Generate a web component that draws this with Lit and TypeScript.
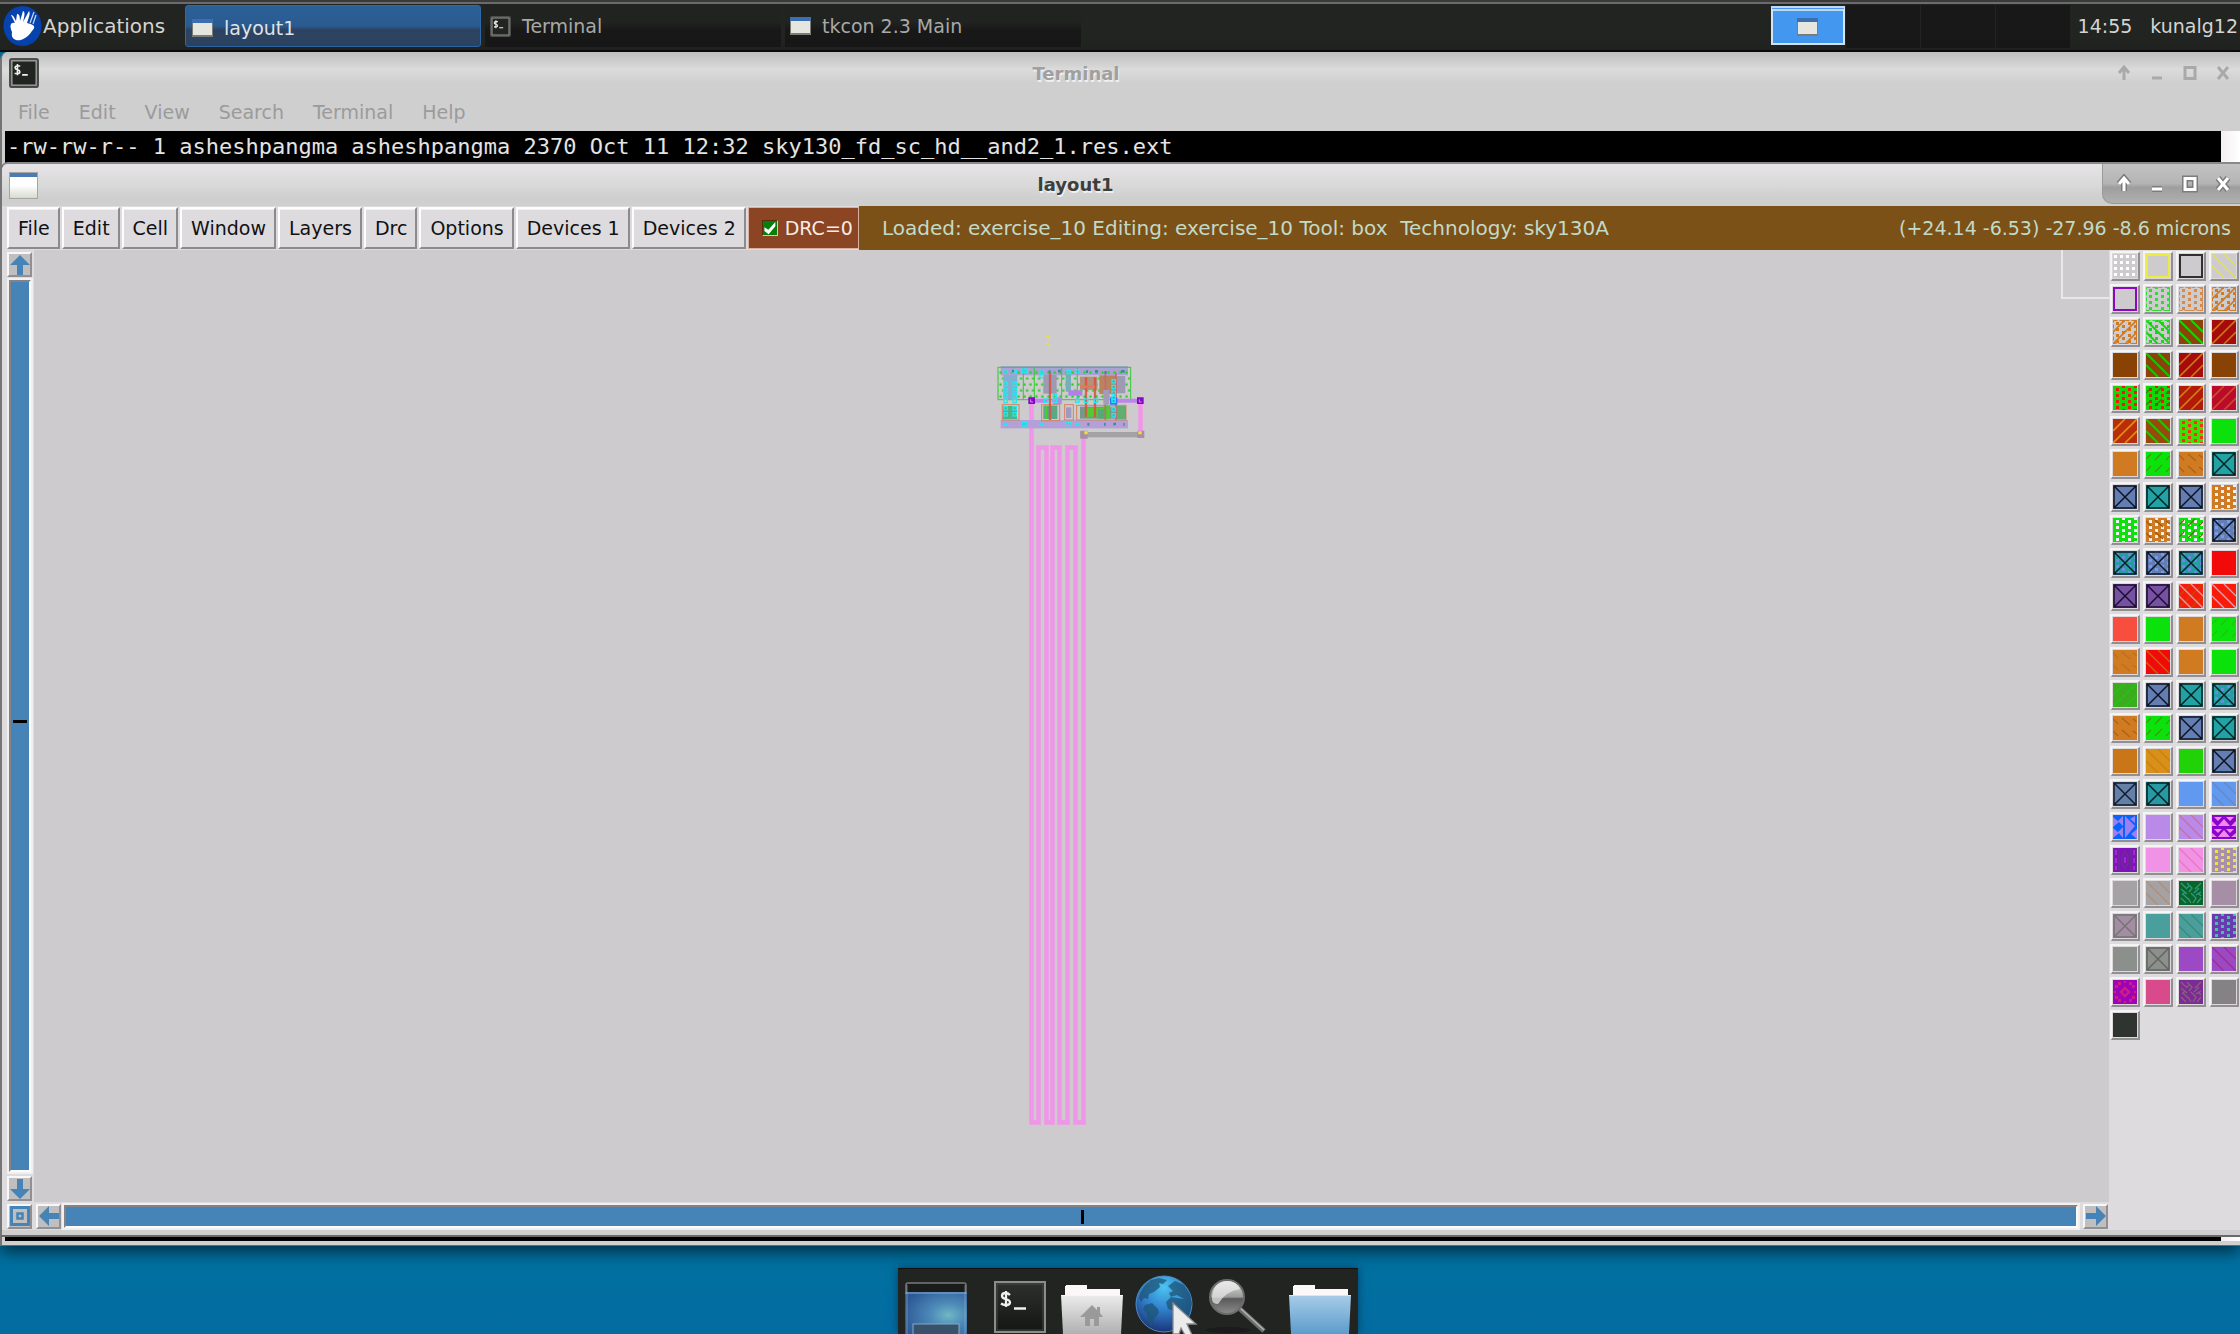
import { LitElement, html, svg, css } from "lit";
import { customElement, property } from "lit/decorators.js";

type Mark = { kind: string; color?: string };
type Swatch = { fill: string; marks?: Mark[] };

const BG = "#cdcbce";
const GREEN = "#0be20b";
const ORANGE = "#d07a22";
const m = (kind: string, color = "#000"): Mark => ({ kind, color });
const s = (fill: string, ...marks: Mark[]): Swatch => ({ fill, marks });
const blueX = s("#647db2", m("cross", "#0c1420"));
const tealX = s("#22a2a4", m("cross", "#04201f"));
const blueDotX = s("#647db2", m("dots", "#6c9cf8"), m("cross", "#0c1420"));
const tealDotX = s("#229ea4", m("dots", "#6a8ce0"), m("cross", "#04201f"));
const brown = s("#884204");
const redSlash = s("#a60a0a", m("slash", "#cc7418"));

const SWATCHES: Swatch[] = [
  s(BG, m("grid", "#fff")), s(BG, m("box", "#ecec3e")), s(BG, m("box", "#2e322e")), s(BG, m("thinback", "#e2e058")),
  s(BG, m("box", "#8a08c4")), s(BG, m("dots", "#2fdc2f"), m("rim", "#2fdc2f")), s(BG, m("dots", "#d88a48"), m("rim", "#d88a48")), s(BG, m("dots", ORANGE), m("slash", ORANGE), m("rim", ORANGE)),
  s(BG, m("dots", ORANGE), m("slash", ORANGE), m("rim", ORANGE)), s(BG, m("dots", "#18d818"), m("back", "#10d810"), m("rim", "#2fdc2f")), s("#8c4208", m("back", "#12d800")), redSlash,
  brown, s("#8c4208", m("back", "#12c800")), redSlash, brown,
  s("#10d808", m("bigdots", "#f01808")), s("#10d808", m("bigdots", "#f01808"), m("dashup", "#4c7000")), s("#b01c08", m("slash", "#d47a14")), s("#ba0c2a", m("slash", "#d2482c")),
  s("#b82e0a", m("slash", "#e88c14")), s("#984a0c", m("back", "#24c400")), s("#3cde04", m("bigdots", "#f43410")), s(GREEN),
  s(ORANGE), s(GREEN, m("dashup", "#3c9a10")), s(ORANGE, m("dashdown", "#a86414")), tealX,
  blueX, tealX, blueX, s(ORANGE, m("holes", "#f2eef2")),
  s(GREEN, m("holes", "#f2eef2")), s(ORANGE, m("holes", "#f2eef2"), m("dashdown", "#9c5a10")), s(GREEN, m("holes", "#f2eef2"), m("dashup", "#7c5a18")), blueDotX,
  tealDotX, blueDotX, tealDotX, s("#f20a0a"),
  s("#7852a2", m("cross", "#1c0c30")), s("#7852a2", m("cross", "#1c0c30")), s("#fa1a08", m("thinslash", "#c84408"), m("thinback", "#d0a0a8")), s("#fa1a08", m("thinback", "#d8a0b0")),
  s("#f84e40"), s(GREEN), s(ORANGE), s(GREEN, m("dashup", "#28c010")),
  s(ORANGE, m("dashdown", "#b87020")), s("#f00a0a", m("thinback", "#d06010")), s(ORANGE), s(GREEN),
  s("#3eaa20", m("thinslash", "#18cc10")), blueX, tealX, tealDotX,
  s(ORANGE, m("dashdown", "#a86414")), s(GREEN, m("dashup", "#3c9a10")), blueX, tealX,
  s("#c87618"), s("#d89018", m("thinback", "#c88018")), s("#22d208"), blueX,
  s("#6480a8", m("cross", "#101c2c")), s("#2898a4", m("cross", "#04201f")), s("#6299f0"), s("#6299f0", m("thinback", "#6688c0")),
  s("#0a62fe", m("bows", "#9a80f0")), s("#ba8ae8"), s("#ba8ae8", m("thinback", "#c470a8")), s("#8a04ca", m("triangles", "#ee8aee")),
  s("#8210bc", m("lattice", "#5e3c80")), s("#f092e6"), s("#f092e6", m("thinback", "#f474bc")), s("#a890ac", m("bigdots", "#f0e23c")),
  s("#a4a2a4"), s("#a4a2a4", m("thinback", "#b48e70")), s("#0a6628", m("weave", "#2e9884")), s("#a68ea6"),
  s("#a28ea2", m("cross", "#767476")), s("#4a9e9c"), s("#4a9e9c", m("thinback", "#3c8c78")), s("#6a3ab0", m("bigdots", "#44c0a4")),
  s("#8c908c"), s("#8c908c", m("cross", "#626662")), s("#9c4ac4"), s("#9c4ac4", m("thinback", "#a02c94")),
  s("#9c04b4", m("diamonds", "#d01c8a")), s("#d84a8c"), s("#7c2a96", m("weave", "#88607a")), s("#848284"),
  s("#303430"),
];

const range = (n: number) => Array.from({ length: n }, (_, i) => i);

function dots(color: string, size: number) {
  return range(4).map((i) =>
    range(5).map((j) => {
      const y = j * 6 + (i % 2 ? -1 : 2);
      return svg`<rect x=${3 + i * 6} y=${y} width=${size} height=${size} fill=${color} />`;
    })
  );
}

function drawMark(k: Mark) {
  const c = k.color!;
  switch (k.kind) {
    case "grid":
      return range(4).map((i) => range(4).map((j) => svg`<rect x=${1 + i * 6} y=${1 + j * 6} width="3" height="3" fill=${c} />`));
    case "box":
      return svg`<rect x="1" y="1" width="22" height="22" fill="none" stroke=${c} stroke-width="2" />`;
    case "rim":
      return svg`<rect x=".5" y=".5" width="23" height="23" fill="none" stroke=${c} stroke-dasharray="4 2" />`;
    case "dots":
      return dots(c, 3);
    case "bigdots":
      return dots(c, 3);
    case "back":
      return svg`<path d="M0 0L24 24M0 12L12 24M12 0L24 12" stroke=${c} stroke-width="2" />`;
    case "slash":
      return svg`<path d="M0 24L24 0M0 12L12 0M12 24L24 12" stroke=${c} stroke-width="1.6" />`;
    case "thinback":
      return svg`<path d="M0 0L24 24M0 12L12 24M12 0L24 12" stroke=${c} stroke-width="1.4" />`;
    case "thinslash":
      return svg`<path d="M0 24L24 0M0 12L12 0M12 24L24 12" stroke=${c} stroke-width="1.4" />`;
    case "dashup":
      return svg`<path d="M0 7L5 2M9 8L16 1M20 8L24 4M0 19L5 14M9 20L16 13M20 20L24 16" stroke=${c} stroke-width="1.2" />`;
    case "dashdown":
      return svg`<path d="M0 3L5 8M9 2L17 9M20 3L24 6M0 15L5 20M9 14L17 21M20 15L24 18" stroke=${c} stroke-width="1.2" />`;
    case "cross":
      return svg`<path d="M1 1H23V23H1ZM1 1L23 23M23 1L1 23" fill="none" stroke=${c} stroke-width="1.5" />`;
    case "holes":
      return dots(c, 3);
    case "bows":
      return svg`<path d="M0 2L6 7L0 12ZM0 13L6 18L0 23ZM10 1V11L5 6ZM10 12V23L5 17ZM12 1L22 11L12 23ZM22 1L17 4L22 8ZM24 14L18 19L24 24Z" fill=${c} />`;
    case "triangles":
      return svg`<path d="M2 2H10L6 6ZM14 2H22L18 6ZM6 11L12 4L18 11ZM0 6L5 11H0ZM24 6L19 11H24ZM2 14H10L6 18ZM14 14H22L18 18ZM6 22L12 15L18 22ZM0 18L5 22H0ZM24 18L19 22H24Z" fill=${c} />`;
    case "lattice":
      return svg`<path d="M.500 0V24M6 0V24M18 0V24M23.500 0V24M9 8L12 4L15 8V16L12 20L9 16Z" fill="none" stroke=${c} stroke-width="1.200" /><path d="M3 2V7M3 10V15M3 18V22M21 2V7M21 10V15M21 18V22M12 9V15" stroke="#a428d8" stroke-width="2" />`;
    case "weave":
      return svg`<path d="M2 2L7 7M8 2L13 7L10 11M22 2L16 8M20 7L15 12M2 8L8 13M4 13L9 18M12 12L17 17L14 22M2 17L7 22M9 17L12 22M22 11L17 14M22 17L18 22M7 8L10 5M3 14L6 11M19 12L22 15" fill="none" stroke=${c} stroke-width="1.4" />`;
    case "diamonds":
      return svg`<path d="M12 8L16 12L12 16L8 12Z" fill="none" stroke=${c} stroke-width="2.400" /><path d="M2 5H5V2H8V5H5V8H2ZM16 2H19V5H22V8H19V5H16ZM2 16H5V19H8V22H5V19H2ZM19 16H22V19H19V22H16V19H19ZM11 1H13V3H11ZM11 21H13V23H11ZM1 11H3V13H1ZM21 11H23V13H21Z" fill=${c} />`;
    default:
      return null;
  }
}

const FONT = css`
  font-family: "DejaVu Sans", "Liberation Sans", sans-serif;
`;

const windowGlyph = html`<svg width="21" height="18" viewBox="0 0 21 18" aria-hidden="true">
  <rect width="21" height="18" fill="#7d7c74" /><rect width="21" height="4" fill="#3d6eb0" />
  <rect x="1" y="4" width="19" height="12" fill="#e6e6e0" />
</svg>`;

const shellGlyph = (w: number, h: number) => html`<svg width=${w} height=${h} viewBox="0 0 32 32" preserveAspectRatio="none" aria-hidden="true">
  <rect x="1" y="1" width="30" height="30" rx="2" fill="#222422" stroke="#4c4e4c" stroke-width="2" />
  <rect x="3" y="3" width="26" height="26" fill="none" stroke="#a8aaa8" stroke-width="1.4" />
  <path d="M12 8.500H8.500Q6.500 8.500 6.500 10.500Q6.500 12 9 12.500Q11.500 13 11.500 14.800Q11.500 16.500 9.500 16.500H6M9 6.500V18.500M14 18H20" fill="none" stroke="#eee" stroke-width="1.7" />
</svg>`;

@customElement("task-bar")
class TaskBar extends LitElement {
  static styles = css`
    :host {
      ${FONT}
      display: flex;
      align-items: stretch;
      height: 52px;
      box-sizing: border-box;
      background: #222421;
      border-top: 2px solid #3a3a3a;
      border-bottom: 2px solid #0b0b0b;
      box-shadow: inset 0 2px #6b6b6b;
      padding: 3px 0 0 3px;
      font-size: 19px;
      color: #d4d4d2;
    }
    button {
      font: inherit;
      color: inherit;
      background: none;
      border: 0;
      padding: 0;
      display: flex;
      align-items: center;
    }
    .apps { width: 182px; gap: 1px; font-size: 20px; flex: none; margin-bottom: 3px; }
    .tasks { display: flex; gap: 4px; flex: 1; }
    .task {
      width: 296px;
      box-sizing: border-box;
      padding: 0 5px;
      gap: 11px;
      margin-bottom: 3px;
      color: #a9a9a7;
      background: linear-gradient(#212321 40%, #181818 60%);
    }
    .task.active {
      color: #dfe4ea;
      padding: 3px 6px 0;
      border: 1px solid #2f69a8;
      border-radius: 3px;
      background: linear-gradient(#2a6098, #2a5b90 50%, #2c4260 60%, #2c4464);
    }
    .pager { display: flex; gap: 1px; padding-right: 8px; }
    .cell { width: 74px; background: #181818; margin-bottom: 2px; justify-content: center; }
    .cell.active {
      background: #4397ef;
      border: 2px solid #d6e4f4;
      border-top: 5px double #c0d8f0;
      box-sizing: border-box;
      margin: 1px 0 5px;
    }
    .clock { display: flex; align-items: center; gap: 18px; margin-bottom: 3px; padding-right: 2px; }
  `;
  render() {
    return html`
      <button class="apps">
        <svg width="39" height="40" viewBox="0 0 39 40" aria-hidden="true">
          <ellipse cx="19.500" cy="20" rx="19" ry="20" fill="#0643ae" />
          <path d="M9 26C6 19 8 16 12 17L8 9Q10 8 13 15L14 8Q17 7 17 15L20 5Q23 5 20 16L26 5Q28 6 24 17C32 19 33 21 29 25C23 34 15 36 11 33Q8 31 9 26Z" fill="#fff" />
          <path d="M27 17L31 6M30 18L33 9" stroke="#cfdcf5" stroke-width="1.2" />
        </svg>
        <span>Applications</span>
      </button>
      <div class="tasks">
        <button class="task active">${windowGlyph}<span>layout1</span></button>
        <button class="task">${shellGlyph(21, 21)}<span>Terminal</span></button>
        <button class="task">${windowGlyph}<span>tkcon 2.3 Main</span></button>
      </div>
      <div class="pager">
        <button class="cell active" aria-label="Workspace 1">${windowGlyph}</button>
        <button class="cell" aria-label="Workspace 2"></button>
        <button class="cell" aria-label="Workspace 3"></button>
        <button class="cell" aria-label="Workspace 4"></button>
      </div>
      <div class="clock"><span>14:55</span><span>kunalg12</span></div>
    `;
  }
}

@customElement("title-bar")
class TitleBar extends LitElement {
  @property() label = "";
  @property() icon = "window";
  @property({ type: Boolean, reflect: true }) active = false;
  static styles = css`
    :host {
      ${FONT}
      display: flex;
      align-items: flex-start;
      height: 44px;
      padding-left: 7px;
      box-sizing: border-box;
      color: #a0a0a0;
      background: linear-gradient(#bfbfbf, #dcdbdc 40%, #cfcfcf 70%);
    }
    :host([active]) {
      height: 42px;
      color: #3d3f3d;
      background: linear-gradient(#e6e4e6, #dad9da 50%, #cfcfcf 80%);
    }
    .icon { width: 40px; height: 42px; display: flex; align-items: center; }
    .name {
      flex: 1;
      text-align: center;
      font-weight: bold;
      font-size: 18px;
      line-height: 44px;
      text-shadow: 1px 2px #f0eff0;
    }
    .controls {
      display: flex;
      height: 42px;
      padding: 0 0 0 4px;
      color: #a9a9a9;
      --halo: none;
    }
    :host([active]) .name { line-height: 42px; }
    :host([active]) .controls {
      height: 39px;
      color: #fff;
      --halo: #7c7c7c;
      background: linear-gradient(#c4c3c4, #b4b4b4 50%, #9e9e9e 60%, #b0b0b0);
      border: 1px solid #9a9a9a;
      border-width: 0 0 1px 1px;
      border-bottom-left-radius: 10px;
    }
    button { width: 33px; border: 0; padding: 0; background: none; color: inherit; display: grid; place-items: center; }
    .controls::after { content: ""; width: 1px; }
    .halo { stroke: var(--halo); }
  `;
  render() {
    const paths = [
      "M10 17V6M5 10L10 4L15 10",
      "M5 15H15",
      "M5 4.500H15V15.500H5Z",
      "M5 4L15 16M15 4L5 16",
    ];
    const names = ["Roll up", "Minimize", "Maximize", "Close"];
    return html`
      <span class="icon">${this.icon === "shell"
        ? shellGlyph(30, 30)
        : html`<svg width="29" height="27" viewBox="0 0 29 27" aria-hidden="true">
            <defs><linearGradient id="g" x2="0" y2="1"><stop stop-color="#fff" /><stop offset=".5" stop-color="#fff" /><stop offset="1" stop-color="#d6d8d0" /></linearGradient></defs>
            <rect x=".5" y=".5" width="28" height="26" fill="url(#g)" stroke="#a4a6a0" />
            <rect x="1" y="1" width="27" height="4" fill="#5079b4" />
          </svg>`}</span>
      <span class="name">${this.label}</span>
      <div class="controls">
        ${paths.map((d, i) => html`<button aria-label=${names[i]}>
          <svg width="20" height="20" viewBox="0 0 20 20" fill="none">
            <path class="halo" d=${d} stroke-width="6" /><path d=${d} stroke="currentColor" stroke-width="3" />
          </svg>
        </button>`)}
      </div>
    `;
  }
}

@customElement("layer-palette")
class LayerPalette extends LitElement {
  static styles = css`
    :host {
      display: grid;
      grid-template-columns: repeat(4, 29px);
      grid-auto-rows: 29px;
      gap: 4px;
      align-content: start;
      padding: 2px 1px 0 2px;
      background: #dddbde;
    }
    button {
      padding: 1px;
      background: #dcd8dc;
      border: 2px solid;
      border-color: #f6f5f6 #918f91 #918f91 #f6f5f6;
      border-width: 1px 2px 2px 1px;
      box-shadow: -1px -1px #f4f3f4;
      display: block;
    }
    svg { display: block; width: 24px; height: 24px; }
  `;
  render() {
    return SWATCHES.map((w, i) => html`<button aria-label="Layer ${i + 1}">
      <svg viewBox="0 0 24 24"><rect width="24" height="24" fill=${w.fill} />${(w.marks ?? []).map(drawMark)}</svg>
    </button>`);
  }
}

const CYAN_CONTACTS = [
  [71, 148], [98, 148], [71, 186], [98, 186], [71, 205], [98, 205], [71, 222], [98, 222], [71, 237], [98, 237],
  [71, 259], [98, 259], [71, 277], [98, 277], [179, 148], [179, 162], [286, 148], [260, 150], [192, 236], [219, 222], [219, 236],
  [286, 236], [312, 236], [342, 236], [395, 178], [395, 195], [395, 212], [395, 228], [395, 236], [395, 262], [395, 280],
];

@customElement("layout-canvas")
class LayoutCanvas extends LitElement {
  static styles = css`
    :host { display: block; position: relative; overflow: hidden; background: #cdcbce; }
    svg { position: absolute; left: 0; top: 0; width: 100%; height: 100%; }
    .corner {
      position: absolute;
      right: 0;
      top: 0;
      width: 46px;
      height: 47px;
      border: 2px solid #e8e7e9;
      border-width: 0 0 2px 2px;
    }
  `;
  render() {
    return html`
      <svg aria-label="exercise_10 layout">
        <defs>
          <pattern id="well" width="18" height="36" patternUnits="userSpaceOnUse" x="56" y="146">
            <rect x="2" y="8" width="7" height="7" fill="#2fcc2f" /><rect x="10" y="26" width="7" height="7" fill="#2fcc2f" />
          </pattern>
        </defs>
        <g transform="translate(-34 -250)">
          <path d="M1031.500 402V1122.500H1038.500V447.500H1046.500V1122.500H1052.500V447.500H1059.500V1122.500H1067.500V447.500H1075.500V1122.500H1083.500V436" fill="none" stroke="#f095e8" stroke-width="4.500" />
          <path d="M1140.500 403V438" stroke="#f095e8" stroke-width="4.500" />
          <g transform="translate(980 320) scale(.33333)">
            <path d="M200 47L210 55M200 69L210 77" stroke="#e6e238" stroke-width="6" />
            <rect x="62" y="138" width="382" height="28" fill="#a9a2d2" />
            <rect x="62" y="300" width="382" height="25" fill="#b3a0d8" />
            <rect x="54" y="142" width="398" height="97" fill="url(#well)" stroke="#34cc34" stroke-width="3" />
            <path d="M130 142V238M163 142V238M245 142V238M292 142V238" stroke="#34cc34" stroke-width="3" />
            <g fill="#9d9bb4">
              <rect x="70" y="165" width="42" height="74" fill="#84aed0" /><rect x="190" y="165" width="40" height="56" />
              <rect x="257" y="155" width="16" height="60" fill="#74b0b4" />
              <rect x="300" y="170" width="52" height="40" fill="#b3917a" /><rect x="358" y="166" width="52" height="56" fill="#b8835e" />
              <rect x="410" y="168" width="26" height="52" />
            </g>
            <g fill="none" stroke="#d5835e" stroke-width="3">
              <rect x="67" y="254" width="50" height="46" /><rect x="185" y="254" width="54" height="48" />
              <rect x="254" y="254" width="26" height="46" /><rect x="290" y="256" width="148" height="44" />
            </g>
            <rect x="69" y="258" width="42" height="39" fill="#4fb386" />
            <rect x="190" y="257" width="42" height="40" fill="#5aa884" />
            <path d="M198 257V297" stroke="#44cf38" stroke-width="6" />
            <rect x="258" y="262" width="16" height="32" fill="#9f9bc0" />
            <rect x="300" y="260" width="138" height="36" fill="#76988c" />
            <path d="M314 264H370V258H390V296H366V290H314Z" fill="#50cc32" />
            <rect x="354" y="268" width="20" height="28" fill="#57a878" />
            <rect x="410" y="258" width="26" height="40" fill="#5fb070" />
            <path d="M210 158V300M318 172V290M345 172V292" stroke="#dd4f42" stroke-width="7" opacity=".85" />
            <path d="M376 158V300M408 158V300" stroke="#c56a74" stroke-width="5" />
            <path d="M300 200H345" stroke="#e07a54" stroke-width="8" />
            <rect x="265" y="211" width="42" height="16" fill="#b080e8" />
            <rect x="370" y="210" width="18" height="44" fill="#a39bb8" />
            <path d="M162 242H205M215 242H245M390 242H472" stroke="#ba86ea" stroke-width="12" />
            <rect x="219" y="232" width="26" height="21" fill="#aa8fe4" />
            <rect x="390" y="232" width="22" height="22" fill="#2c7cf4" />
            <g fill="none" stroke="#26e6ee" stroke-width="4">
              ${CYAN_CONTACTS.map(([x, y]) => svg`<rect x=${x + 1} y=${y + 1} width="10" height="10" />`)}
              <rect x="125" y="147" width="16" height="11" fill="#26d6e6" /><rect x="125" y="307" width="16" height="11" fill="#26d6e6" />
              <rect x="257" y="307" width="16" height="10" /><path d="M70 313H82M178 313H190M286 313H298" stroke-width="10" />
            </g>
            <path d="M96 153H102M206 155H212M234 153H242M318 155H324M345 154H354M373 157H380M423 154H434M322 313H328M372 313H377M400 312H408M430 313H434" stroke="#3b8c98" stroke-width="8" />
            <rect x="301" y="336" width="191" height="16" fill="#a4a2a4" />
            <path d="M301 332H323V356H301ZM472 332H493V354H472Z" fill="#a58ea6" />
            <path d="M313 338H323M475 338H485" stroke="#f0e030" stroke-width="9" />
            <path d="M145 232H165V252H145ZM471 232H491V252H471Z" fill="#8408c4" />
            <path d="M152 238V246H159M478 238V246H485" fill="none" stroke="#e48af0" stroke-width="3" />
          </g>
        </g>
      </svg>
      <div class="corner"></div>
    `;
  }
}

const arrow = (d: string) => html`<svg width="20" height="20" viewBox="0 0 20 20" aria-hidden="true"><path d=${d} fill="#4683b6" /></svg>`;

@customElement("layout-window")
class LayoutWindow extends LitElement {
  @property({ type: Number }) scrollXPercent = 50.5;
  @property({ type: Number }) scrollYPercent = 49.3;
  static styles = css`
    :host {
      ${FONT}
      display: flex;
      flex-direction: column;
      background: #dddbde;
      font-size: 19px;
      border-left: 2px solid #757575;
      border-top: 2px solid #8a898a;
      border-bottom: 2px solid #6a6a6a;
      border-top-left-radius: 8px;
      overflow: hidden;
    }
    .tools {
      display: flex;
      gap: 2px;
      height: 44px;
      padding-left: 5px;
      box-sizing: border-box;
    }
    .menu {
      font: inherit;
      color: #111;
      background: #dddbde;
      border: 2px solid;
      border-color: #fdfdfd #8c8a8c #8c8a8c #fdfdfd;
      padding: 0 8px 0 9px;
      margin: 1px 0;
      box-shadow: inset 0 1px #f2f1f2;
    }
    .drc {
      display: flex;
      align-items: center;
      gap: 7px;
      padding: 0 5px 0 13px;
      margin: 1px 0;
      background: #8b4522;
      border: 1px solid #d8b0a0;
      color: #f4ece8;
    }
    .drc input {
      appearance: none;
      width: 16px;
      height: 16px;
      margin: 0;
      background: #0a7e0a;
      border: 1px solid #5b2c14;
      border-right-color: #d0c8c8;
      border-bottom-color: #d0c8c8;
    }
    .drc input::before {
      content: "";
      display: block;
      height: 100%;
      background: #fff;
      clip-path: polygon(12% 45%, 40% 62%, 90% 8%, 90% 38%, 42% 95%, 12% 72%);
    }
    .status {
      flex: 1;
      display: flex;
      justify-content: space-between;
      align-items: center;
      white-space: pre;
      background: #7c5118;
      color: #c2dac8;
      padding: 0 9px 0 23px;
      margin-left: -2px;
    }
    .message { font-size: 20px; }
    .body { flex: 1; display: flex; min-height: 0; }
    .main {
      flex: 1;
      display: grid;
      grid-template-columns: 28px 1fr;
      grid-template-rows: 1fr 28px;
      padding-left: 4px;
      min-width: 0;
    }
    .vert { display: flex; flex-direction: column; align-items: center; gap: 2px; padding: 2px 1px 1px 0; }
    .horiz { display: flex; align-items: center; gap: 2px; padding: 0 1px 0 2px; }
    .step {
      width: 25px;
      height: 25px;
      flex: none;
      box-sizing: border-box;
      padding: 0;
      display: grid;
      place-items: center;
      background: #bebfbe;
      border: 2px solid;
      border-color: #f8f7f8 #918f91 #918f91 #f8f7f8;
    }
    .corner { display: grid; place-items: center start; padding-left: 1px; }
    .trough {
      position: relative;
      flex: 1;
      box-sizing: border-box;
      background: #4683b6;
      border: 2px solid;
      border-color: #858285 #fbfbfb #fbfbfb #858285;
      outline: 2px solid #f1f0f1;
    }
    .vert .trough { width: 22px; margin: 1px 0 2px; }
    .horiz .trough { height: 23px; margin: 0 3px 0 1px; }
    .mark { position: absolute; background: #000; }
    .vert .mark { left: 2px; width: 14px; height: 3px; }
    .horiz .mark { top: 3px; width: 3px; height: 14px; }
    .foot { height: 5px; background: #cfcfcf; }
    layer-palette { flex: none; }
  `;
  render() {
    const menus = ["File", "Edit", "Cell", "Window", "Layers", "Drc", "Options", "Devices 1", "Devices 2"];
    return html`
      <title-bar active label="layout1"></title-bar>
      <div class="tools">
        ${menus.map((t) => html`<button class="menu">${t}</button>`)}
        <label class="drc"><input type="checkbox" checked />DRC=0</label>
        <div class="status">
          <span class="message">Loaded: exercise_10 Editing: exercise_10 Tool: box  Technology: sky130A</span>
          <span>(+24.14 -6.53) -27.96 -8.6 microns</span>
        </div>
      </div>
      <div class="body">
        <div class="main">
          <div class="vert">
            <button class="step" aria-label="Scroll up">${arrow("M10 0L20 10H13V20H7V10H0Z")}</button>
            <div class="trough"><span class="mark" style="top:${this.scrollYPercent}%"></span></div>
            <button class="step" aria-label="Scroll down">${arrow("M10 20L20 10H13V0H7V10H0Z")}</button>
          </div>
          <layout-canvas></layout-canvas>
          <div class="corner">
            <button class="step" aria-label="Full view">
              <svg width="20" height="20" viewBox="0 0 20 20"><path d="M1.500 1.500H18.500V18.500H1.500Z" fill="none" stroke="#4683b6" stroke-width="3" /><path d="M7.500 7.500H12.500V12.500H7.500Z" fill="none" stroke="#4683b6" stroke-width="2.500" /></svg>
            </button>
          </div>
          <div class="horiz">
            <button class="step" aria-label="Scroll left">${arrow("M0 10L10 0V7H20V13H10V20Z")}</button>
            <div class="trough"><span class="mark" style="left:${this.scrollXPercent}%"></span></div>
            <button class="step" aria-label="Scroll right">${arrow("M20 10L10 0V7H0V13H10V20Z")}</button>
          </div>
        </div>
        <layer-palette></layer-palette>
      </div>
      <div class="foot"></div>
    `;
  }
}

@customElement("terminal-window")
class TerminalWindow extends LitElement {
  static styles = css`
    :host {
      ${FONT}
      display: flex;
      flex-direction: column;
      background: #cfcfcf;
      border-left: 2px solid #757575;
      border-bottom: 1px solid #6a6a6a;
      border-top-left-radius: 8px;
      overflow: hidden;
      box-shadow: 0 6px 16px rgba(0, 20, 30, 0.7);
    }
    nav { display: flex; gap: 29px; padding: 0 0 3px 16px; height: 32px; align-items: center; font-size: 19px; }
    nav button { font: inherit; color: #9b9b9b; border: 0; padding: 0; background: none; }
    .view { flex: 1; display: flex; margin: 0 0 4px 3px; }
    pre {
      flex: 1;
      margin: 0;
      padding-left: 2px;
      background: #000;
      color: #e4e4e4;
      font: 22px/32px "DejaVu Sans Mono", "Liberation Mono", monospace;
    }
    .bar { width: 19px; background: linear-gradient(90deg, #f3eff0, #fff); }
  `;
  render() {
    return html`
      <title-bar icon="shell" label="Terminal"></title-bar>
      <nav>${["File", "Edit", "View", "Search", "Terminal", "Help"].map((t) => html`<button>${t}</button>`)}</nav>
      <div class="view">
        <pre>-rw-rw-r-- 1 asheshpangma asheshpangma 2370 Oct 11 12:32 sky130_fd_sc_hd__and2_1.res.ext</pre>
        <div class="bar"></div>
      </div>
    `;
  }
}

@customElement("app-dock")
class AppDock extends LitElement {
  static styles = css`
    :host {
      display: flex;
      gap: 8px;
      padding: 0 6px;
      height: 66px;
      box-sizing: border-box;
      background: #222421;
      border-top: 1px solid #111;
      box-shadow: 0 0 8px rgba(0, 20, 40, 0.5);
    }
    button { position: relative; width: 64px; height: 65px; padding: 0; border: 0; background: none; }
    i { width: 4px; }
    svg { display: block; }
    .cursor { position: absolute; left: 40px; top: 33px; }
  `;
  folder(top: string, bottom: string, home: boolean) {
    const id = home ? "fh" : "fb";
    return html`<svg width="64" height="65" viewBox="0 0 64 65">
      <defs><linearGradient id=${id} x2="0" y2="1"><stop stop-color=${top} /><stop offset="1" stop-color=${bottom} /></linearGradient></defs>
      <path d="M5 17H6V16H27V20H60V30H5Z" fill="#fcf8fa" />
      <path d="M1 26H63L61 65H3Z" fill="url(#${id})" /><path d="M1 26.500H63" stroke="#fff" opacity=".55" />
      ${home ? svg`<path d="M20 48L32 36L37 41V38H40V44L43 48H39V57H34V50H30V57H25V48Z" fill="#999a99" />` : null}
    </svg>`;
  }
  render() {
    return html`
      <button aria-label="Show desktop"><svg width="64" height="65" viewBox="0 0 64 65">
        <defs><radialGradient id="d" cx=".7" cy=".55" r=".75"><stop stop-color="#6fb8c4" /><stop offset=".4" stop-color="#4c88b8" /><stop offset="1" stop-color="#2c5894" /></radialGradient></defs>
        <rect x="2" y="14" width="60" height="10" rx="2" fill="#1a1c1b" stroke="#777977" stroke-width="1.500" />
        <rect x="1" y="23" width="62" height="42" fill="url(#d)" /><path d="M1 24H63" stroke="#8aaed4" />
        <path d="M3 65V16M61 65V16" stroke="#b0bcc4" opacity=".5" />
        <rect x="9" y="55" width="46" height="12" fill="#39526a" stroke="#7eaccc" />
      </svg></button>
      <i></i>
      <button aria-label="Terminal"><svg width="64" height="65" viewBox="0 0 64 65">
        <defs><linearGradient id="t" x2="0" y2="1"><stop stop-color="#2e302e" /><stop offset="1" stop-color="#141614" /></linearGradient></defs>
        <rect x="7" y="13" width="50" height="50" fill="url(#t)" stroke="#8b8d8b" stroke-width="2" />
        <rect x="9" y="15" width="46" height="46" fill="none" stroke="#494b49" />
        <path d="M22 26Q20 24 17.500 24Q14 24 14 27Q14 29 17.500 30Q22 31 22 33.500Q22 36 18 36Q15 36 13 34.500M18 22V38M26 39.500H38" fill="none" stroke="#f0f0f0" stroke-width="2.300" />
      </svg></button>
      <button aria-label="Home folder">${this.folder("#ececec", "#b0b0b0", true)}</button>
      <button aria-label="Web browser"><svg width="64" height="65" viewBox="0 0 64 65">
        <defs><radialGradient id="w" cx=".5" cy=".2" r=".8"><stop stop-color="#4cc4f0" /><stop offset=".5" stop-color="#3080cc" /><stop offset="1" stop-color="#1c3478" /></radialGradient></defs>
        <circle cx="32" cy="35" r="28" fill="url(#w)" stroke="#4c8cc4" />
        <path d="M7 29Q9 18 19 11L27 9L35 11L31 15L27 14L28 18L22 23L17 25L16 30L12 29L9 33ZM13 36L20 34L26 40L27 44L22 50L20 58L16 53L15 45L11 40ZM36 17L43 12L52 16L58 25L60 35L56 46L49 52L45 43L36 40L34 33L39 28L37 24L41 22Z" fill="#1d5476" opacity=".75" />
        <path d="M38 28L45 26L52 30L45 29Z" fill="#3a9cd8" />
      </svg>
      <svg class="cursor" width="28" height="32" viewBox="0 0 28 32" aria-hidden="true"><path d="M1 1V32H7L9 26L13 33H20L15 22H24Z" fill="#ebebeb" stroke="#8a8c90" stroke-width="1.300" /></svg></button>
      <button aria-label="Application finder"><svg width="64" height="65" viewBox="0 0 64 65">
        <defs><linearGradient id="l" x2="0" y2="1"><stop stop-color="#e6e6e6" /><stop offset=".5" stop-color="#9a9a9a" /><stop offset=".55" stop-color="#5a5a5a" /><stop offset="1" stop-color="#8c8c8c" /></linearGradient></defs>
        <ellipse cx="24" cy="61" rx="22" ry="3" fill="#1a1b1a" />
        <path d="M36 40L60 62" stroke="#6e6e6e" stroke-width="5" /><path d="M36 39L60 61" stroke="#b4b4b4" stroke-width="1.500" />
        <circle cx="23" cy="28" r="17" fill="url(#l)" stroke="#6c6c6c" stroke-width="2" />
        <path d="M8 31Q8 13 23 12Q33 12 36 20Q22 22 14 35Q9 35 8 31Z" fill="#ededed" opacity=".7" />
      </svg></button>
      <i></i>
      <button aria-label="Folder">${this.folder("#a8cce8", "#5c9ccc", false)}</button>
    `;
  }
}

@customElement("app-root")
class AppRoot extends LitElement {
  static styles = css`
    :host {
      display: flex;
      flex-direction: column;
      height: 100vh;
      overflow: hidden;
      background: linear-gradient(#0071a0 94%, #046ba0);
    }
    .desktop { position: relative; flex: 1; }
    terminal-window { position: absolute; inset: 0 0 88px 0; }
    layout-window { position: absolute; inset: 110px 0 97px 0; }
    .tray { position: absolute; inset: auto 0 0 16px; display: flex; justify-content: center; }
  `;
  render() {
    return html`
      <task-bar></task-bar>
      <div class="desktop">
        <terminal-window></terminal-window>
        <layout-window></layout-window>
        <div class="tray"><app-dock></app-dock></div>
      </div>
    `;
  }
}
